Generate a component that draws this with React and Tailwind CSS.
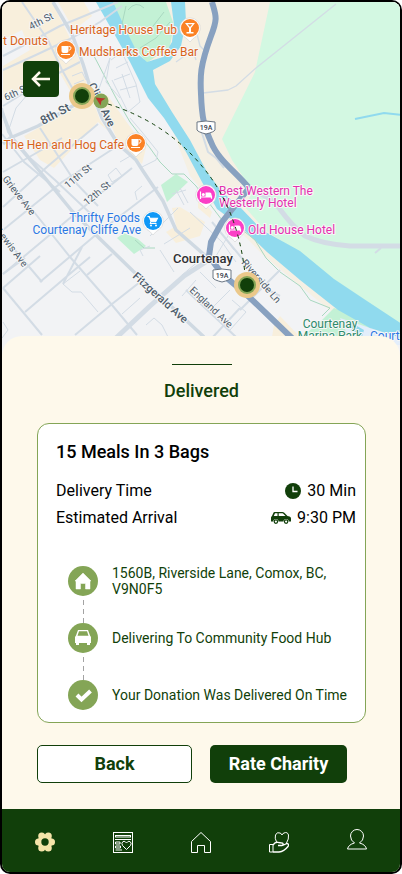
import React from 'react';

const GRID_ROADS = [
    'M3 56 L30 42 L60 26 L118 2',
    'M3 70 L38 54 L72 38 L100 22 L122 6',
    'M3 106 L45 80 L80 62',
    'M3 172 L45 148 L62 138',
    'M3 207 L48 166 L98 124',
    'M3 230 L62 182 L122 143',
    'M3 274 L70 218 L132 168',
    'M40 282 L98 233 L158 187',
    'M25 258 L3 274',
    'M82 247 L63 284 M25 312 L72 272 L90 257',
    'M87 275 L112 254',
    'M75 335 L112 304 L140 282',
    'M2 108 L8 132 L30 158 L55 180 L92 215',
    'M22 2 L48 40 L62 70 L78 98',
    'M2 134 L24 162 L60 192',
    'M2 178 L34 212 L70 257 L112 305 L137 335',
    'M3 236 L42 282',
    'M3 288 L42 335',
    'M3 288 L40 256',
    'M40 128 L75 182 L98 206',
    'M186 290 L236 337',
    'M212 338 L240 308',
    'M240 310 L280 270',
    'M212 222 L240 256 L268 290 L280 296',
];

const THIN_ROADS = [
    'M63 284 L72 292 L81 292 L98 312',
    'M63 284 L80 271',
    'M122 314 L140 298',
    'M95 100 L110 58 L106 82 L120 98',
    'M111 60 L122 52 L136 84 L140 102 L128 112 L112 80',
    'M116 68 L128 62 M114 80 L130 74 M120 90 L136 86 M122 74 L130 98',
    'M8 132 L16 108 L33 88 L50 78',
    'M72 76 L82 72 L86 80 M74 84 L84 80',
    'M130 118 L142 132 L158 152 L156 160 L140 168',
    'M108 175 L116 168 L122 176 L112 182 Z M120 162 L132 155',
    'M176 190 L184 205 M180 188 L188 203 M172 194 L186 190',
    'M160 250 L174 272 M164 244 L190 228 M182 275 L200 260 M150 236 L178 208',
    'M190 212 L222 242 L236 262',
    'M228 236 L216 256 M222 234 L234 250',
    'M137 200 L135 192 L142 186 M143 256 L140 250 L150 246',
    'M2 338 L8 330 L3 322',
    'M146 325 L154 318 L162 325 L168 337',
    'M200 272 L216 288 M230 290 L212 308 M196 280 L182 296',
    'M232 300 L246 312 L230 330',
];

const MAIN_ROADS = [
    'M53 2 L72 34 L83 64 L91 90 L102 118 L118 144 L136 160 L143 171 L163 201 L176 230 L208 258',
    'M2 112 L12 138 L37 168 L72 211 L97 236 L133 271 L173 308 L204 337',
    'M3 144 L10 138 L38 126 L76 104 L92 92',
];

const STREETS = [
    { name: '4th St', x: 31, y: 30, angle: -27, size: 10 },
    { name: '6th St', x: 6, y: 101, angle: -25, size: 10 },
    { name: '8th St', x: 43, y: 125, angle: -28, size: 12, strong: true },
    { name: '11th St', x: 68, y: 189, angle: -40, size: 10 },
    { name: '12th St', x: 87, y: 206, angle: -40, size: 10 },
    { name: 'Cliffe Ave', x: 88, y: 85, angle: 64, size: 11, strong: true },
    { name: 'Grieve Ave', x: 2, y: 179, angle: 52, size: 10 },
    { name: 'Lewis Ave', x: -4, y: 232, angle: 53, size: 10 },
    { name: 'Fitzgerald Ave', x: 132, y: 277, angle: 42, size: 11, strong: true },
    { name: 'England Ave', x: 189, y: 291, angle: 43, size: 10 },
    { name: 'Riverside Ln', x: 241, y: 263, angle: 49, size: 10 },
];

const PLACES = [
    { name: 'Heritage House Pub', x: 177, y: 34, anchor: 'end', fill: '#d9631a' },
    { name: 't Donuts', x: 3, y: 45, anchor: 'start', fill: '#d9631a' },
    { name: 'Mudsharks Coffee Bar', x: 79, y: 56, anchor: 'start', fill: '#d9631a' },
    { name: 'The Hen and Hog Cafe', x: 124, y: 149, anchor: 'end', fill: '#d9631a' },
    { name: 'Thrifty Foods', x: 140, y: 222, anchor: 'end', fill: '#2b78e4' },
    { name: 'Courtenay Cliffe Ave', x: 141, y: 234, anchor: 'end', fill: '#2b78e4' },
    { name: 'Best Western The', x: 219, y: 195, anchor: 'start', fill: '#e331ae' },
    { name: 'Westerly Hotel', x: 219, y: 207, anchor: 'start', fill: '#e331ae' },
    { name: 'Old House Hotel', x: 248, y: 234, anchor: 'start', fill: '#e331ae' },
    { name: 'Courtenay', x: 330, y: 328, anchor: 'middle', fill: '#2e8b6b' },
    { name: 'Marina Park', x: 330, y: 340, anchor: 'middle', fill: '#2e8b6b' },
    { name: 'Courtenay', x: 370, y: 340, anchor: 'start', fill: '#2b78e4' },
];

const PINS = [
    { x: 190, y: 28, kind: 'bar', fill: '#fb8225' },
    { x: 66, y: 50, kind: 'cup', fill: '#fb8225' },
    { x: 136, y: 143, kind: 'cup', fill: '#fb8225' },
    { x: 153, y: 221, kind: 'cart', fill: '#1098f7' },
    { x: 206, y: 195, kind: 'bed', fill: '#fb3fc6' },
    { x: 235, y: 228, kind: 'bed', fill: '#fb3fc6' },
];

const GLYPHS = {
    bar: <path d="M-5 -5 H5 L1 0 V4 H3.500 V5.500 H-3.500 V4 H-1 V0 Z M-2.500 -3.700 L0 -1 L2.500 -3.700 Z" fill="#fff" fillRule="evenodd" />,
    cup: (
        <g>
            <path d="M-4.500 -4 H2.500 V1 Q2.500 3 0.500 3 H-2.500 Q-4.500 3 -4.500 1 Z" fill="#fff" />
            <path d="M2.500 -3.300 H4 Q5 -3.300 5 -2 Q5 0 3 0.200" fill="none" stroke="#fff" />
            <path d="M-5 4.500 H4" stroke="#fff" />
        </g>
    ),
    cart: (
        <g>
            <path d="M-5.500 -4.500 H-3.700 L-2 0.700 H2.700 L4.500 -2.800 H-3.200" fill="#fff" stroke="#fff" strokeWidth="1.100" />
            <path d="M-2 0.700 L-3 2.500 H3.500" fill="none" stroke="#fff" />
            <circle cx="-2" cy="4.500" r="1" fill="#fff" />
            <circle cx="3" cy="4.500" r="1" fill="#fff" />
        </g>
    ),
    bed: (
        <g>
            <path d="M-5.500 -3.500 V4 M5.500 3.800 V0.500 M-5.500 2 H5.500" stroke="#fff" strokeWidth="1.200" />
            <path d="M-0.500 -2.500 H3.800 Q5.500 -2.500 5.500 -0.500 V2 H-0.500 Z" fill="#fff" />
            <circle cx="-2.700" cy="-0.500" r="1.500" fill="#fff" />
        </g>
    ),
};

function RoutePoint({ x, y }) {
    return (
        <g>
            <circle cx={x} cy={y} r="13" fill="#ebc88a" />
            <circle cx={x} cy={y} r="9" fill="#84a556" />
            <circle cx={x} cy={y} r="7" fill="#113f0a" />
        </g>
    );
}

function Shield({ x, y }) {
    return (
        <g>
            <path
                d={`M${x - 9} ${y - 5} Q${x} ${y - 7} ${x + 9} ${y - 5} V${y + 3} Q${x + 8} ${y + 5} ${x} ${y + 7} Q${x - 8} ${y + 5} ${x - 9} ${y + 3} Z`}
                fill="#fff"
                stroke="#6b7683"
            />
            <text x={x} y={y + 3} textAnchor="middle" fontSize="7" fontWeight="500" fill="#39434e">19A</text>
        </g>
    );
}

function CityMap() {
    return (
        <svg
            className="absolute inset-0 h-full w-full font-['Roboto',sans-serif]"
            viewBox="2 2 398 354"
            preserveAspectRatio="xMidYMid slice"
            role="img"
            aria-label="Delivery route map"
        >
            <rect x="-100" y="-100" width="600" height="600" fill="#f2f3f5" />

            {/* commercial blocks */}
            <g fill="#f8efdc">
                <path d="M2 2 H52 L68 34 L80 62 L88 88 L72 94 L58 70 L40 78 L3 100 V66 L30 50 L22 30 L2 40 Z" />
                <path d="M58 2 H84 L92 16 L74 30 Z" />
                <path d="M24 136 L92 98 L100 120 L116 142 L136 160 L118 140 L98 122 L54 168 L40 160 Z" />
                <path d="M98 92 L108 96 L128 124 L146 148 L142 164 L118 142 Z" />
                <path d="M172 208 L180 207 L205 222 L200 236 L176 243 L166 232 L176 226 Z" />
                <path d="M198 194 L212 212 L210 218 L198 208 Z" />
                <path d="M274 325 L280 316 L300 337 H272 Z" />
            </g>

            {/* rural land and greens */}
            <path d="M160 2 H400 V345 H365 L332 312 L300 286 L262 254 L215 206 L190 176 L150 72 Z" fill="#f5f0e4" />
            <path d="M270 2 H402 V325 L334 280 L300 253 L265 230 L244 206 L253 192 L232 160 L222 139 L255 72 Z" fill="#d3f8e2" />
            <path d="M112 2 H166 L174 25 L170 46 L147 63 L130 42 Z" fill="#c3f1d5" />
            <path d="M161 185 L176 174 L188 182 L167 202 Z" fill="#c3f1d5" />
            <path d="M117 238 L124 233 L138 239 L146 246 L134 254 Z" fill="#c3f1d5" />
            <path d="M334 308 L360 318 L380 337 H302 L322 320 Z" fill="#c3f1d5" />
            <path d="M340 318 L400 338 V345 H352 Z" fill="#e3eefb" />

            {/* river */}
            <path
                d="M96 2 H113 L126 30 L138 54 L147 62 L163 57 L172 42 L174 25 L171 2 H185 L186 22 L181 46 L170 61 L153 70 L155 84 L172 112 L190 140 L207 172 L222 192 L240 207 L262 230 L300 251 L334 279 L367 301 L402 324 V338 L370 328 L338 310 L300 280 L267 252 L240 226 L217 209 L202 182 L186 152 L164 118 L148 98 L130 62 L112 30 Z"
                fill="#90daee"
            />
            <path d="M350 322 L364 330 L362 337 L352 332 Z" fill="#90daee" />
            <path d="M355 119 L384 113 L402 115" fill="none" stroke="#90daee" strokeWidth="2" />

            <g fill="none" stroke="#a9d8c0" strokeWidth="1">
                <path d="M94 56 L116 98 L130 122 L150 148 L160 162 L172 174" />
                <path d="M172 174 L184 174 L196 186 L222 220 L218 228" />
                <path d="M245 232 L255 240 L266 258 L280 272 L300 286 L310 300 L330 308 L322 316" />
                <path d="M135 240 L144 248 L155 248" />
                <path d="M126 6 L122 24 L134 34 L150 30 L164 12 M140 48 L156 38 L170 22 M128 10 Q136 0 144 8" />
            </g>

            <g fill="none" stroke="#d3dce5" strokeLinejoin="round">
                {THIN_ROADS.map(d => <path key={d} d={d} strokeWidth="1" />)}
                {GRID_ROADS.map(d => <path key={d} d={d} strokeWidth="2" />)}
                {MAIN_ROADS.map(d => <path key={d} d={d} strokeWidth="3.500" stroke="#cfd9e2" />)}
                <path d="M116 338 L150 306 L184 276 L212 258" strokeWidth="5" />
                <path d="M336 4 L256 68 L236 86 L228 90 L203 93" strokeWidth="1.300" />
                <path d="M196 30 L200 46 L204 50 M194 54 L196 60 M176 62 L190 52" strokeWidth="1.300" />
                <path d="M201 130 L208 152 L216 158 L224 168" strokeWidth="2" />
                <path d="M402 246 H350 Q322 244 305 236 Q292 226 279 208 Q268 194 250 190" strokeWidth="5" />
                <path d="M375 253 L381 248" strokeWidth="2" />
            </g>

            <path
                d="M212 2 C216 16 218 18 211 36 C200 66 200 76 201 94 C202 124 206 130 211 142 C218 160 236 172 249 188 L222 222 L211 242 L209 256 L222 274 L246 294 L296 342"
                fill="none"
                stroke="#88a1c0"
                strokeWidth="6"
                strokeLinejoin="round"
            />

            <g stroke="#f7f7f7" strokeWidth="2" paintOrder="stroke" strokeLinejoin="round">
                {STREETS.map(s => (
                    <text
                        key={s.name}
                        x={s.x}
                        y={s.y}
                        fontSize={s.size}
                        fontWeight={s.strong ? 500 : 400}
                        fill="#4d5c6b"
                        transform={`rotate(${s.angle} ${s.x} ${s.y})`}
                    >
                        {s.name}
                    </text>
                ))}
                <text x="173" y="263" fontSize="13" fontWeight="500" fill="#303134">Courtenay</text>
                {PLACES.map(p => (
                    <text key={p.name + p.x} x={p.x} y={p.y} fontSize="12" textAnchor={p.anchor} fill={p.fill}>
                        {p.name}
                    </text>
                ))}
            </g>

            <Shield x={206} y={127} />
            <Shield x={222} y={275} />

            {PINS.map(p => (
                <g key={`${p.x}-${p.y}`} transform={`translate(${p.x} ${p.y})`}>
                    <path d="M0 14 Q-2 11 -6 8.500 A10.300 10.300 0 1 1 6 8.500 Q2 11 0 14 Z" fill="#fff" stroke="#c9c9c9" strokeWidth="0.500" />
                    <circle r="9" fill={p.fill} />
                    {GLYPHS[p.kind]}
                </g>
            ))}

            <path
                d="M108 104 Q165 122 201 165 Q238 208 245 274"
                fill="none"
                stroke="#113f0a"
                strokeWidth="1"
                strokeDasharray="4 4"
            />
            <RoutePoint x={82} y={96} />
            <RoutePoint x={247} y={285} />
            <circle cx="101" cy="101" r="7.500" fill="#84a556" />
            <path d="M95.500 97.500 L105.500 98.500 L101.500 101 L100.500 105.500 Z" fill="#b8322a" />
        </svg>
    );
}

function ClockIcon() {
    return (
        <svg className="h-4 w-4" viewBox="0 0 16 16" aria-hidden="true">
            <circle cx="8" cy="8" r="8" fill="#113f0a" />
            <path d="M8 3.500 V8.500 H12.500" fill="none" stroke="#fff" strokeWidth="1.300" />
        </svg>
    );
}

function CarSideIcon() {
    return (
        <svg className="h-3 w-5" viewBox="0 0 20 12" aria-hidden="true">
            <path
                d="M3.500 0 H11.500 Q12.500 0 13.300 0.800 L16.500 4 L18.500 4.500 Q20 5 20 6.500 V9.500 H17.700 A2.600 2.600 0 0 0 12.500 9.500 H7.500 A2.600 2.600 0 0 0 2.300 9.500 H0 V5.500 Q0 4.500 1 4 L2.300 1 Q2.700 0 3.500 0 Z M4 1.300 L2.800 4 H6.500 V1.300 Z M7.700 1.300 V4 H14.500 L12 1.500 Q11.700 1.300 11.300 1.300 Z"
                fill="#113f0a"
                fillRule="evenodd"
            />
            <circle cx="4.900" cy="9.600" r="1.700" fill="none" stroke="#113f0a" strokeWidth="1.200" />
            <circle cx="15.100" cy="9.600" r="1.700" fill="none" stroke="#113f0a" strokeWidth="1.200" />
        </svg>
    );
}

const STEPS = [
    {
        text: '1560B, Riverside Lane, Comox, BC, V9N0F5',
        icon: <path d="M15 7 L23 15 H22 V23 H17.500 V17.500 H12.500 V23 H8 V15 H7 Z" fill="#fff" stroke="#fff" strokeLinejoin="round" strokeWidth="0.500" />,
    },
    {
        text: 'Delivering To Community Food Hub',
        icon: (
            <path
                d="M10 7 H20 L22 12.500 L23 14 V20 H22 V22 H19 V20 H11 V22 H8 V20 H7 V14 L8 12.500 Z M11 8.300 L9.500 12.700 H20.500 L19 8.300 Z"
                fill="#fff"
                fillRule="evenodd"
            />
        ),
    },
    {
        text: 'Your Donation Was Delivered On Time',
        icon: <path d="M9 15 L13.500 19.500 L22.500 11" fill="none" stroke="#fff" strokeWidth="4" />,
    },
];

const NAV_ITEMS = [
    {
        label: 'Settings',
        icon: (
            <g fill="#f5e4a9" stroke="none">
                <circle cx="3.500" cy="10" r="3.500" />
                <circle cx="16.500" cy="10" r="3.500" />
                <circle cx="6.700" cy="4" r="3.500" />
                <circle cx="13.300" cy="4" r="3.500" />
                <circle cx="6.700" cy="16" r="3.500" />
                <circle cx="13.300" cy="16" r="3.500" />
                <circle cx="10" cy="10" r="7.500" />
                <circle cx="10" cy="10" r="3.700" fill="#113f0a" />
            </g>
        ),
    },
    {
        label: 'Donations',
        icon: (
            <g>
                <rect x="0.500" y="0.500" width="19" height="20" />
                <rect x="2.500" y="3.500" width="15" height="1.500" />
                <path d="M2 7.500 H18 M2.500 10 H7 V12 H2.500 Z M2.500 14 H7.500 V16 H2.500 Z M2.500 18 H9" />
                <path d="M13.500 17.500 L9.500 13.500 Q8 11 10 9.500 Q12 8.500 13.500 11 Q15 8.500 17 9.500 Q19 11 17.500 13.500 Z" fill="#113f0a" />
            </g>
        ),
    },
    {
        label: 'Home',
        icon: <path d="M0.500 20.500 V9.500 L10 0.500 L19.500 9.500 V20.500 H13.500 V13.500 H6.500 V20.500 Z" />,
    },
    {
        label: 'Give',
        icon: (
            <g>
                <path d="M7.500 10 Q5.500 6 6.500 3 Q8 -0.500 11 1 Q12.500 1.500 13 3 Q13.500 1.500 15 1 Q18.500 -0.500 19.500 3 Q20 7 17.500 11" />
                <path d="M0.500 12.500 H4 V20 H0.500 Z" />
                <path d="M4 13 Q6.500 9.500 9.500 10.500 L13.500 11 Q15 12.500 13 13.500 H9 M13.500 13.500 L18 11.500 Q20.500 12 19 14.500 Q15 19.500 10 20 H4" strokeWidth="1.300" />
            </g>
        ),
    },
    {
        label: 'Profile',
        raised: true,
        icon: (
            <path d="M7.500 14 Q3.500 11.500 3.500 7 A6.500 6.500 0 0 1 16.500 7 Q16.500 11.500 12.500 14 Q18.500 15.500 19.500 20 H0.500 Q1.500 15.500 7.500 14 Z" />
        ),
    },
];

export default function App() {
    return (
        <div className="flex min-h-screen flex-col overflow-hidden rounded-[10px] border-2 border-black bg-[#fef9eb] font-['Roboto',sans-serif]">
            <section className="relative h-[354px] shrink-0 overflow-hidden pt-[59px] pl-[21px]">
                <CityMap />
                <button
                    type="button"
                    aria-label="Go back"
                    className="relative flex h-9 w-9 items-center justify-center rounded bg-[#113f0a]"
                >
                    <svg className="h-5 w-5" viewBox="0 0 20 20" fill="none" stroke="#fef9eb" strokeWidth="2.500" aria-hidden="true">
                        <path d="M19 10 H3 M9 3 L2 10 L9 17" />
                    </svg>
                </button>
            </section>

            <main className="relative -mt-5 flex flex-1 flex-col rounded-t-[20px] bg-[#fef9eb] pt-7 pr-[34px] pb-[26px] pl-[35px]">
                <div className="h-px w-15 self-center bg-[#113f0a]" />
                <h1 className="mt-3 text-center text-lg leading-7 font-medium text-[#113f0a]">Delivered</h1>

                <div className="mt-[18px] rounded-xl border border-[#84a556] bg-white pt-3.5 pr-[9px] pb-3 pl-[18px]">
                    <h2 className="text-lg leading-7 font-medium text-black">15 Meals In 3 Bags</h2>

                    <dl className="mt-[11px] text-base leading-[27px] text-black">
                        <div className="flex justify-between">
                            <dt>Delivery Time</dt>
                            <dd className="flex items-center gap-1.5">
                                <ClockIcon />
                                30 Min
                            </dd>
                        </div>
                        <div className="flex justify-between">
                            <dt>Estimated Arrival</dt>
                            <dd className="flex items-center gap-1.5">
                                <CarSideIcon />
                                9:30 PM
                            </dd>
                        </div>
                    </dl>

                    <ol className="mt-[35px] pl-3">
                        {STEPS.map((step, i) => (
                            <li key={step.text} className="flex gap-3.5">
                                <div className="flex flex-col items-center">
                                    <svg className="h-[30px] w-[30px] shrink-0" viewBox="0 0 30 30" aria-hidden="true">
                                        <circle cx="15" cy="15" r="15" fill="#84a556" />
                                        {step.icon}
                                    </svg>
                                    {i < STEPS.length - 1 && (
                                        <div className="h-[27px] w-px bg-[repeating-linear-gradient(to_bottom,transparent_0_4px,#a3a3a3_4px_9px)]" />
                                    )}
                                </div>
                                <p className="flex h-[30px] items-center text-sm leading-4 text-[#113f0a]">{step.text}</p>
                            </li>
                        ))}
                    </ol>
                </div>

                <div className="mt-[22px] flex gap-[18px]">
                    <button
                        type="button"
                        className="h-[38px] w-[155px] rounded-[5px] border border-[#113f0a] bg-white text-lg font-bold text-[#113f0a]"
                    >
                        Back
                    </button>
                    <button
                        type="button"
                        className="h-[38px] w-[137px] rounded-[5px] bg-[#113f0a] text-lg font-bold text-white"
                    >
                        Rate Charity
                    </button>
                </div>
            </main>

            <nav className="flex h-[63px] shrink-0 items-center justify-between bg-[#113f0a] px-[33px]">
                {NAV_ITEMS.map(item => (
                    <button
                        key={item.label}
                        type="button"
                        aria-label={item.label}
                        className={item.raised ? 'pb-0.5' : 'pt-1'}
                    >
                        <svg className="h-[21px] w-5" viewBox="0 0 20 21" fill="none" stroke="#fff" strokeWidth="1" aria-hidden="true">
                            {item.icon}
                        </svg>
                    </button>
                ))}
            </nav>
        </div>
    );
}
